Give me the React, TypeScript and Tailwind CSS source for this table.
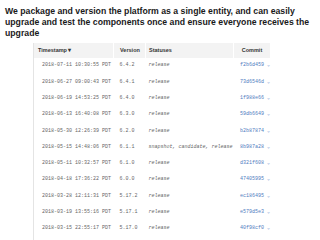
import React from "react";

const rows: [string, string, string, string][] = [
  ["2018-07-11 10:30:55 PDT", "6.4.2", "release", "f2b6d459"],
  ["2018-06-27 09:00:43 PDT", "6.4.1", "release", "73d6546d"],
  ["2018-06-19 14:53:25 PDT", "6.4.0", "release", "1f988e66"],
  ["2018-06-13 16:40:08 PDT", "6.3.0", "release", "59db6649"],
  ["2018-05-30 12:26:39 PDT", "6.2.0", "release", "b2b87874"],
  ["2018-05-15 14:48:06 PDT", "6.1.1", "snapshot, candidate, release", "8b987a28"],
  ["2018-05-11 10:32:57 PDT", "6.1.0", "release", "d321f608"],
  ["2018-04-18 17:36:22 PDT", "6.0.0", "release", "47405995"],
  ["2018-03-28 12:11:31 PDT", "5.17.2", "release", "ec186495"],
  ["2018-03-19 13:55:16 PDT", "5.17.1", "release", "e579d5e3"],
  ["2018-03-15 22:55:17 PDT", "5.17.0", "release", "40f98cf0"],
  ["2018-03-07 17:57:51 PDT", "5.16.2", "release", "80cd7b2d"],
];

export default function App() {
  return (
    <div className="w-[320px] h-[240px] overflow-hidden bg-white">
      <p
        className="pl-[5px] pr-[2px] pt-[6px] text-[8.7px] leading-[11px] font-bold text-[#1a1a1a]"
        style={{ fontFamily: '"Liberation Sans", Arial, sans-serif' }}
      >
        We package and version the platform as a single entity, and can easily upgrade and test the components once and ensure everyone receives the upgrade
      </p>
      <div className="ml-[33px] mt-[4px] w-[237px] border-l border-[#e4e4e4]">
        <div
          className="flex h-[15px] items-center bg-[#f3f3f3] text-[5.5px] font-semibold text-[#333]"
          style={{ fontFamily: '"Liberation Sans", Arial, sans-serif' }}
        >
          <div className="w-[80px] pl-[4px] h-full flex items-center border-r border-white">Timestamp ▾</div>
          <div className="w-[32px] pl-[6px] h-full flex items-center border-r border-white">Version</div>
          <div className="w-[88px] pl-[3px] h-full flex items-center border-r border-white">Statuses</div>
          <div className="flex-1 h-full flex items-center justify-center">Commit</div>
        </div>
        <div style={{ fontFamily: '"Liberation Mono", "Courier New", monospace' }}>
          {rows.map((r, i) => (
            <div key={i} className="flex h-[16.3px] items-center text-[5px] text-[#666]">
              <div className="w-[80px] pl-[8px] whitespace-nowrap">{r[0]}</div>
              <div className="w-[32px] pl-[6px] whitespace-nowrap">{r[1]}</div>
              <div className="w-[88px] pl-[3px] italic whitespace-nowrap">{r[2]}</div>
              <div className="flex-1 pl-[7px] whitespace-nowrap text-[#4f7cc0]">
                {r[3]} <span className="text-[#8aa6d4]">⌄</span>
              </div>
            </div>
          ))}
        </div>
      </div>
    </div>
  );
}
